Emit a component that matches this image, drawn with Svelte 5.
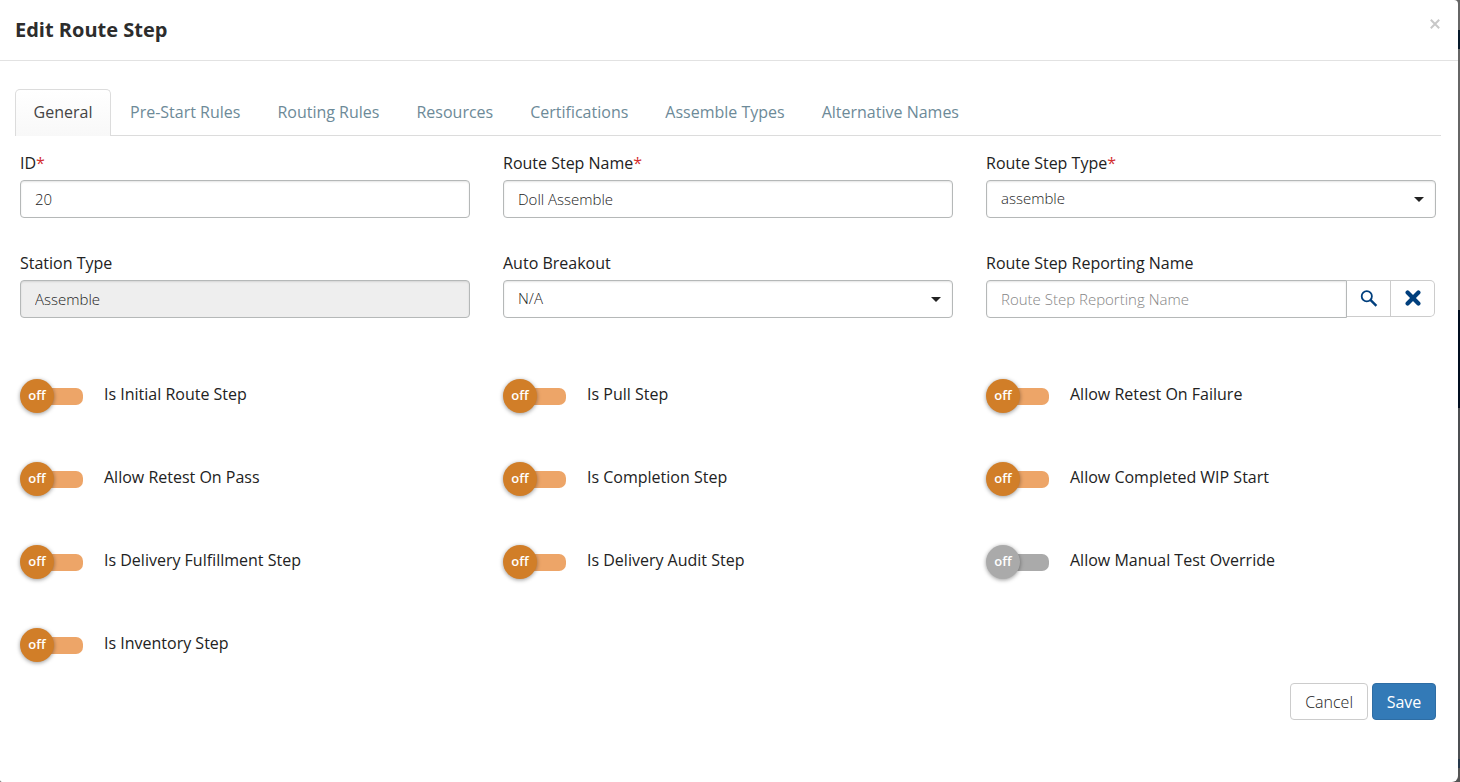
<script>
  const tabs = ['General', 'Pre-Start Rules', 'Routing Rules', 'Resources', 'Certifications', 'Assemble Types', 'Alternative Names'];
  let active = $state('General');

  let toggles = $state([
    { label: 'Is Initial Route Step', on: false },
    { label: 'Is Pull Step', on: false },
    { label: 'Allow Retest On Failure', on: false },
    { label: 'Allow Retest On Pass', on: false },
    { label: 'Is Completion Step', on: false },
    { label: 'Allow Completed WIP Start', on: false },
    { label: 'Is Delivery Fulfillment Step', on: false },
    { label: 'Is Delivery Audit Step', on: false },
    { label: 'Allow Manual Test Override', on: false, disabled: true },
    { label: 'Is Inventory Step', on: false }
  ]);

  let reportingName = $state('');
</script>

<div class="backdrop">
  <div class="modal" role="dialog" aria-labelledby="title">
    <header>
      <h1 id="title">Edit Route Step</h1>
      <button class="close" type="button" aria-label="Close">
        <svg width="10" height="10" viewBox="0 0 10 10"><path d="M.8 .8 9.2 9.2M9.2 .8 .8 9.2" stroke="currentColor" stroke-width="2" fill="none" /></svg>
      </button>
    </header>

    <div class="tabs" role="tablist">
      {#each tabs as tab}
        <button type="button" role="tab" class="tab" class:active={tab === active} aria-selected={tab === active} onclick={() => (active = tab)}>{tab}</button>
      {/each}
    </div>

    <form onsubmit={(e) => e.preventDefault()}>
      <div class="fields">
        <div class="field">
          <label for="step-id">ID<span class="req">*</span></label>
          <input id="step-id" class="control" type="text" value="20" />
        </div>
        <div class="field">
          <label for="step-name">Route Step Name<span class="req">*</span></label>
          <input id="step-name" class="control" type="text" value="Doll Assemble" />
        </div>
        <div class="field">
          <label for="step-type">Route Step Type<span class="req">*</span></label>
          <div class="select">
            <select id="step-type" class="control"><option>assemble</option></select>
          </div>
        </div>
        <div class="field">
          <label for="station-type">Station Type</label>
          <input id="station-type" class="control" type="text" value="Assemble" disabled />
        </div>
        <div class="field">
          <label for="auto-breakout">Auto Breakout</label>
          <div class="select">
            <select id="auto-breakout" class="control"><option>N/A</option></select>
          </div>
        </div>
        <div class="field">
          <label for="reporting-name">Route Step Reporting Name</label>
          <div class="group">
            <input id="reporting-name" class="control" type="text" placeholder="Route Step Reporting Name" bind:value={reportingName} />
            <button type="button" class="addon" aria-label="Search">
              <svg width="18" height="18" viewBox="0 0 18 18" fill="none" stroke="currentColor">
                <circle cx="6.8" cy="6.2" r="5.1" stroke-width="1.8" />
                <path d="M10.4 9.8 16.4 15.8" stroke-width="2.4" />
              </svg>
            </button>
            <button type="button" class="addon" aria-label="Clear" onclick={() => (reportingName = '')}>
              <svg width="16" height="18" viewBox="0 0 16 18"><path d="M2.6 2.6 13.4 13.4M13.4 2.6 2.6 13.4" stroke="currentColor" stroke-width="4.2" stroke-linecap="round" /></svg>
            </button>
          </div>
        </div>
      </div>

      <div class="toggles">
        {#each toggles as t}
          <label class="toggle">
            <input type="checkbox" role="switch" bind:checked={t.on} disabled={t.disabled} />
            <span class="switch" aria-hidden="true"><span class="knob">{t.on ? 'on' : 'off'}</span></span>
            <span class="caption">{t.label}</span>
          </label>
        {/each}
      </div>

      <footer>
        <button type="button" class="btn">Cancel</button>
        <button type="submit" class="btn primary">Save</button>
      </footer>
    </form>
  </div>
</div>

<style>
  :global(body) {
    margin: 0;
  }
  .backdrop {
    min-height: 100vh;
    box-sizing: border-box;
    padding-right: 2px;
    display: flex;
    background: linear-gradient(#666 30px, #06192a 30px 49px, #666 49px 310px, #000d1f 310px 408px, #4c4f52 408px 759px, #26384a 759px 768px, #555 768px);
    font-family: 'Open Sans', 'Noto Sans', sans-serif;
    font-size: 16px;
    color: #333;
  }
  .modal {
    flex: 1;
    background: #fff;
    border-radius: 0 4px 6px 2px;
  }
  button,
  input,
  select {
    font: inherit;
    color: inherit;
    margin: 0;
    box-sizing: border-box;
  }
  button {
    cursor: pointer;
  }
  header {
    display: flex;
    justify-content: space-between;
    align-items: flex-start;
    height: 60px;
    padding: 0 15px;
    border-bottom: 1px solid #e2e2e2;
  }
  h1 {
    margin: 0;
    font-size: 20px;
    font-weight: 700;
    line-height: 60px;
    color: #2d2d2d;
  }
  .close {
    display: grid;
    place-items: center;
    margin-top: 16px;
    width: 16px;
    height: 16px;
    padding: 0;
    border: 0;
    background: none;
    color: #c8c8c8;
  }
  .tabs {
    display: flex;
    gap: 1px;
    margin: 28px 17px 0 15px;
    border-bottom: 1px solid #dcdcdc;
  }
  .tab {
    height: 47px;
    min-width: 96px;
    margin-bottom: -1px;
    padding: 0 17px 2px;
    border: 1px solid transparent;
    border-bottom: 0;
    border-radius: 5px 5px 0 0;
    background: none;
    color: #6d8a98;
  }
  .tab.active {
    border-color: #dcdcdc;
    background: linear-gradient(#fff, #f8f8f8);
    color: #444;
    font-weight: 500;
  }
  form {
    padding: 16px 22px 0 20px;
  }
  .fields,
  .toggles {
    display: grid;
    grid-template-columns: repeat(3, minmax(0, 1fr));
    column-gap: 33px;
  }
  .fields {
    row-gap: 34px;
  }
  .field > label {
    display: block;
    height: 28px;
    line-height: 22px;
    font-weight: 500;
    color: #222;
  }
  .field > label .req {
    color: #d32f2f;
  }
  .control {
    display: block;
    width: 100%;
    height: 38px;
    padding: 0 14px;
    border: 1px solid #b5b8b8;
    border-radius: 4px;
    background: #fff;
    box-shadow: inset 0 1px 2px #0000001c;
    color: #222;
    font-size: 15px;
    font-weight: 300;
  }
  .control:disabled {
    background: #eee;
  }
  .control::placeholder {
    color: #858585;
    opacity: 1;
  }
  .select {
    position: relative;
  }
  .select select {
    appearance: none;
    padding-bottom: 2px;
  }
  .select::after {
    content: '';
    position: absolute;
    right: 12px;
    top: 17px;
    border: 5px solid transparent;
    border-top-color: #222;
    border-bottom: 0;
    pointer-events: none;
  }
  .group {
    display: flex;
    align-items: flex-start;
    padding-right: 1px;
  }
  .group .control {
    flex: 1;
    min-width: 0;
    border-radius: 4px 0 0 4px;
  }
  .addon {
    display: grid;
    place-items: center;
    width: 44px;
    height: 37px;
    padding: 0;
    border: 1px solid #ccc;
    border-left: 0;
    background: #fff;
    color: #003f7d;
  }
  .addon:last-child {
    border-radius: 0 5px 5px 0;
  }
  .toggles {
    margin-top: 54px;
  }
  .toggle {
    display: flex;
    align-items: flex-start;
    height: 83px;
    padding-top: 7px;
    box-sizing: border-box;
    position: relative;
    font-weight: 500;
    color: #222;
    cursor: pointer;
  }
  .toggle:last-child {
    height: 62px;
  }
  .toggle input {
    position: absolute;
    opacity: 0;
    width: 64px;
    height: 34px;
  }
  .switch {
    display: flex;
    align-items: center;
    width: 64px;
    height: 34px;
    position: relative;
  }
  .switch::before {
    content: '';
    position: absolute;
    left: 1px;
    right: 1px;
    top: 9px;
    height: 17px;
    border-radius: 7px;
    background: #eda568;
  }
  .knob {
    position: relative;
    width: 34px;
    height: 34px;
    border-radius: 50%;
    background: #d17e28;
    box-shadow: 0 1px 4px #00000066;
    color: #fff;
    font-size: 13px;
    font-weight: 600;
    line-height: 32px;
    text-align: center;
  }
  input:checked + .switch {
    justify-content: flex-end;
  }
  input:disabled + .switch::before,
  input:disabled + .switch .knob {
    background: #aaa;
  }
  .caption {
    margin-left: 20px;
    line-height: 30px;
  }
  footer {
    display: flex;
    justify-content: flex-end;
    gap: 4px;
    padding-bottom: 60px;
  }
  .btn {
    height: 37px;
    min-width: 64px;
    padding: 0 14px;
    border: 1px solid #ccc;
    border-radius: 4px;
    background: #fff;
    font-weight: 300;
    color: #222;
  }
  .btn.primary {
    padding: 0 12px;
    border-color: #2e6da4;
    background: #337ab7;
    color: #fff;
    font-weight: 500;
  }
</style>
